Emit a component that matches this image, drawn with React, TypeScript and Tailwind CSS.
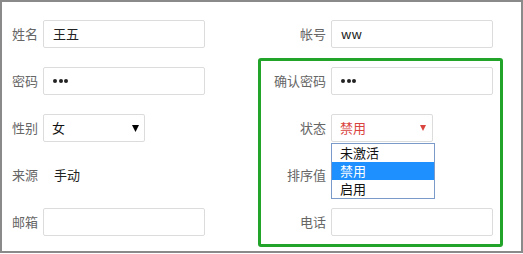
import type { ReactNode } from "react";

const font = { fontFamily: '"Noto Sans CJK SC", "Noto Sans", sans-serif' };

function TextBox({ children, className = "" }: { children?: ReactNode; className?: string }) {
  return (
    <div
      className={`flex h-[28px] w-[162px] items-center rounded-[2px] border border-[#dcdcdc] bg-white pl-[9px] text-[13px] text-[#222] ${className}`}
    >
      {children}
    </div>
  );
}

function Dots() {
  return (
    <span className="flex items-center gap-[1.5px]">
      <span className="h-[4px] w-[4px] rounded-full bg-[#222]" />
      <span className="h-[4px] w-[4px] rounded-full bg-[#222]" />
      <span className="h-[4px] w-[4px] rounded-full bg-[#222]" />
    </span>
  );
}

function Arrow({ color, w, h }: { color: string; w: number; h: number }) {
  return (
    <svg width={w} height={h} viewBox={`0 0 ${w} ${h}`}>
      <polygon points={`0,0 ${w},0 ${w / 2},${h}`} fill={color} />
    </svg>
  );
}

function Row({ children }: { children: ReactNode }) {
  return <div className="flex h-[28px] items-center">{children}</div>;
}

function LeftLabel({ children }: { children: ReactNode }) {
  return <span className="w-[31px] shrink-0 text-[13px] text-[#666]">{children}</span>;
}

function RightLabel({ children }: { children: ReactNode }) {
  return <span className="mr-[5px] w-[66px] shrink-0 text-right text-[13px] text-[#666]">{children}</span>;
}

const options = ["未激活", "禁用", "启用"];

export default function App() {
  return (
    <div className="h-[254px] w-[523px] bg-white" style={font}>
      <div className="relative h-[253px] w-[523px] border-2 border-[#8a8a8a] bg-white pl-[10px] pt-[18px]">
        <div className="flex">
          {/* left column */}
          <div className="flex w-[248px] flex-col gap-[19px]">
            <Row>
              <LeftLabel>姓名</LeftLabel>
              <TextBox>王五</TextBox>
            </Row>
            <Row>
              <LeftLabel>密码</LeftLabel>
              <TextBox>
                <Dots />
              </TextBox>
            </Row>
            <Row>
              <LeftLabel>性别</LeftLabel>
              <div className="flex h-[28px] w-[102px] items-center justify-between rounded-[2px] border border-[#dcdcdc] pl-[8px] pr-[5px] text-[13px] text-[#111]">
                <span>女</span>
                <Arrow color="#000" w={7} h={7} />
              </div>
            </Row>
            <Row>
              <LeftLabel>来源</LeftLabel>
              <span className="pl-[11px] text-[13px] text-[#222]">手动</span>
            </Row>
            <Row>
              <LeftLabel>邮箱</LeftLabel>
              <TextBox />
            </Row>
          </div>

          {/* right column */}
          <div className="flex flex-col gap-[19px]">
            <Row>
              <RightLabel>帐号</RightLabel>
              <TextBox>ww</TextBox>
            </Row>
            <Row>
              <RightLabel>确认密码</RightLabel>
              <TextBox>
                <Dots />
              </TextBox>
            </Row>
            <Row>
              <RightLabel>状态</RightLabel>
              <div className="relative">
                <div className="flex h-[28px] w-[102px] items-center justify-between rounded-[2px] border border-[#dcdcdc] pl-[8px] pr-[6px] text-[13px] text-[#d9443f]">
                  <span>禁用</span>
                  <Arrow color="#d9443f" w={6} h={6} />
                </div>
                <div className="absolute left-0 top-[29px] z-10 w-[104px] border border-[#7a9bc9] bg-white">
                  {options.map((o) => (
                    <div
                      key={o}
                      className={`flex h-[18px] items-center pl-[8px] text-[13px] ${
                        o === "禁用" ? "bg-[#1e90ff] text-white" : "text-[#111]"
                      }`}
                    >
                      {o}
                    </div>
                  ))}
                </div>
              </div>
            </Row>
            <Row>
              <RightLabel>排序值</RightLabel>
            </Row>
            <Row>
              <RightLabel>电话</RightLabel>
              <TextBox />
            </Row>
          </div>
        </div>

        {/* highlight frame */}
        <div className="pointer-events-none absolute left-[256px] top-[56px] h-[189px] w-[245px] rounded-[3px] border-[3px] border-[#22a32a]" />
      </div>
    </div>
  );
}
